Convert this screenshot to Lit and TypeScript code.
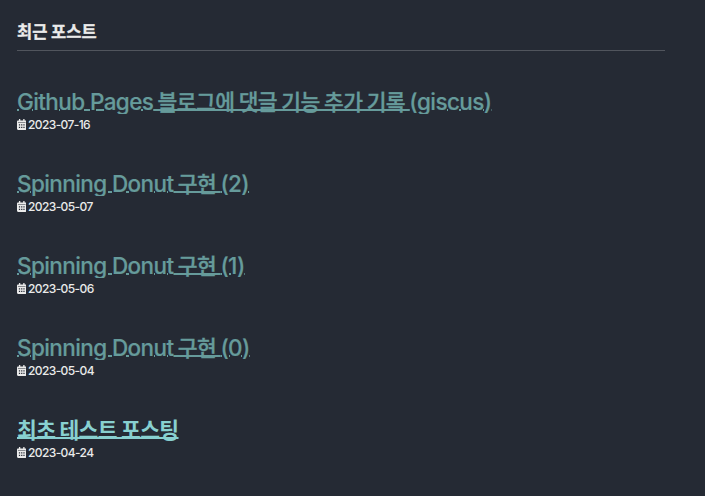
import { LitElement, html, css, svg } from "lit";
import { customElement } from "lit/decorators.js";

interface Run { text: string; kind: string; }
interface Post { runs: Run[]; date: string; unread?: boolean; }

const donut = (part: string): Run[] => [
  { text: "Spinning Donut", kind: "latin" },
  { text: " 구현 ", kind: "hangul" },
  { text: `(${part})`, kind: "latin" },
];

const posts: Post[] = [
  {
    runs: [
      { text: "Github Pages", kind: "latin" },
      { text: " 블로그에 댓글 기능 추가 기록 ", kind: "hangul" },
      { text: "(giscus)", kind: "latin" },
    ],
    date: "2023-07-16",
  },
  { runs: donut("2"), date: "2023-05-07" },
  { runs: donut("1"), date: "2023-05-06" },
  { runs: donut("0"), date: "2023-05-04" },
  { runs: [{ text: "최초 테스트 포스팅", kind: "strong" }], date: "2023-04-24", unread: true },
];

const calendar = svg`<path fill-rule="evenodd" d="M1.200 1.400H2V.4c0-.5 1.500-.5 1.500 0v1h3V.4c0-.5 1.500-.5 1.500 0v1h.8c.7 0 1.200.5 1.200 1.200v7.200c0 .7-.5 1.200-1.200 1.200H1.200C.5 11 0 10.500 0 9.800V2.600c0-.7.5-1.200 1.200-1.200zM1 3.600v.5h8v-.5zM2 5.300v1.200h1.300V5.300zM4.350 5.300v1.200h1.300V5.300zM6.700 5.300v1.200H8V5.300zM2 7.700v1.200h1.300V7.700zM4.350 7.700v1.200h1.300V7.700zM6.700 7.700v1.200H8V7.700z"/>`;

@customElement("app-root")
export class AppRoot extends LitElement {
  static styles = css`
    :host {
      display: block;
      box-sizing: border-box;
      height: 496px;
      padding: 17px 40px 0 17px;
      overflow: hidden;
      background: #252a34;
      color: #eaeaea;
      font-family: Inter, "Noto Sans CJK KR", sans-serif;
    }
    h3 {
      box-sizing: border-box;
      height: 34px;
      margin: 0 0 38px;
      border-bottom: 1px solid #51555d;
      font: 700 16.5px/28px "Noto Sans CJK KR", sans-serif;
      -webkit-text-stroke: 0.3px currentColor;
    }
    article { height: 82px; }
    h2 {
      height: 25px;
      margin: 0;
      overflow: hidden;
      font-size: 22.5px;
      line-height: 24px;
      font-weight: 500;
      white-space: pre;
    }
    a {
      color: #669b9b;
      text-decoration: underline 2px;
      text-underline-offset: -1px;
    }
    .unread { color: #88d0d0; }
    .latin { letter-spacing: -0.6px; -webkit-text-stroke: 0.2px currentColor; }
    .hangul {
      font-family: "Noto Sans CJK KR", sans-serif;
      font-size: 21.5px;
      letter-spacing: -0.58px;
      -webkit-text-stroke: 0.35px currentColor;
    }
    .strong {
      font-family: "Noto Sans CJK KR", sans-serif;
      font-size: 21.5px;
      font-weight: 700;
      letter-spacing: -0.65px;
    }
    .meta {
      display: flex;
      align-items: center;
      height: 16px;
      margin: 3px 0 0;
      font-size: 12px;
      line-height: 16px;
      font-weight: 500;
      letter-spacing: -0.6px;
    }
    svg { width: 9.5px; height: 11px; margin: 0 2px 1px -0.5px; fill: currentColor; }
  `;

  render() {
    return html`
      <h3>최근 포스트</h3>
      ${posts.map((post) => html`<article>
        <h2><a class=${post.unread ? "unread" : ""}>${post.runs.map((r) => html`<span class=${r.kind}>${r.text}</span>`)}</a></h2>
        <p class="meta"><svg viewBox="0 0 10 11" preserveAspectRatio="none">${calendar}</svg><time>${post.date}</time></p>
      </article>`)}
    `;
  }
}
